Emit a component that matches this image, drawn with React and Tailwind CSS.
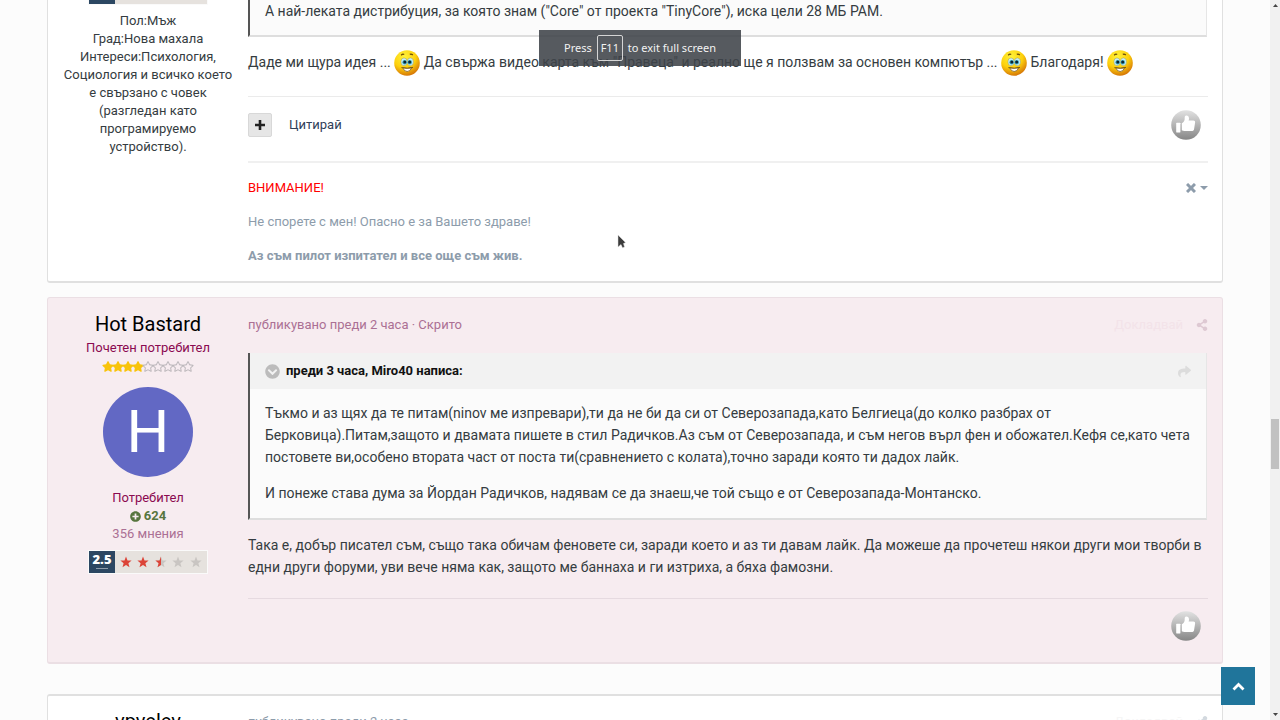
import React from 'react';
import { FaShareAlt, FaShare, FaPlusCircle, FaChevronCircleDown, FaStar, FaRegStar } from 'react-icons/fa';

function Smiley() {
  return (
    <svg className="inline-block h-[26px] w-[26px] align-middle" viewBox="0 0 26 26" role="img" aria-label="усмивка">
      <defs>
        <radialGradient id="face" cx="0.4" cy="0.25" r="0.8">
          <stop offset="0" stopColor="#fff23a" />
          <stop offset="0.55" stopColor="#fdd00c" />
          <stop offset="1" stopColor="#d06a06" />
        </radialGradient>
      </defs>
      <circle cx="13" cy="13" r="12.8" fill="url(#face)" />
      <path d="M7.2 5.200q1.500-1.600 3-.7M15.800 4.300q1.600-.7 3 .6" stroke="#6b4c08" strokeWidth="1.300" fill="none" />
      <ellipse cx="10" cy="11.800" rx="3.100" ry="3.900" fill="#c9eef5" stroke="#8a8a50" strokeWidth="0.400" />
      <ellipse cx="16.400" cy="11.800" rx="3.100" ry="3.900" fill="#c9eef5" stroke="#8a8a50" strokeWidth="0.400" />
      <circle cx="10.600" cy="12.200" r="2.200" fill="#38a9c6" />
      <circle cx="15.800" cy="12.200" r="2.200" fill="#38a9c6" />
      <circle cx="10.800" cy="12" r="1.500" fill="#0d2430" />
      <circle cx="15.700" cy="12" r="1.500" fill="#0d2430" />
      <path d="M7.400 17.600q5.800 1.400 11.600-.2" fill="none" stroke="#7a5a14" strokeWidth="1" />
      <path d="M8.800 17.900q4.400 1 8.800 0-1.400 3.600-4.400 3.600t-4.400-3.600z" fill="#fff" stroke="#6b4a10" strokeWidth="0.700" />
    </svg>
  );
}

function LikeButton() {
  return (
    <button type="button" aria-label="Харесай" className="mr-[7px] block">
      <svg className="h-[30px] w-[30px]" viewBox="0 0 30 30">
        <defs>
          <linearGradient id="like" x1="0" y1="0" x2="0" y2="1">
            <stop offset="0" stopColor="#e2e2e2" />
            <stop offset="1" stopColor="#868686" />
          </linearGradient>
        </defs>
        <circle cx="15" cy="15" r="14.8" fill="url(#like)" />
        <rect x="5.2" y="12.8" width="4.2" height="9.6" rx="0.4" fill="#fff" />
        <path d="M10.8 13.2c1.800-.8 2.800-2.600 2.900-4.200 0-1.600-.2-3.400 1.300-3.600 1.900-.2 3 1.100 3 3 0 1-.2 1.500-.4 2.100h4.800c1.200 0 1.900.9 1.700 2l-1 6.400c-.2 1.300-1.100 2.100-2.300 2.100h-7.400c-.9 0-1.800-.2-2.600-.7z" fill="#fff" />
      </svg>
    </button>
  );
}

const starPath = 'M6 .6l1.500 3.800 4.100.2-3.200 2.600 1.100 4L6 9l-3.500 2.200 1.100-4L.4 4.600l4.100-.2z';

function RatingBadge() {
  return (
    <div className="mx-auto flex h-6 w-[120px] border border-[#fafafa] bg-[#e6e2de]">
      <div className="flex w-[26px] flex-col items-center bg-[#2c4762] text-white">
        <span className="font-['Open_Sans',sans-serif] text-[13px] leading-[17px] font-extrabold">2.5</span>
        <span className="h-px w-3 bg-[#8e9cab]"></span>
      </div>
      <svg className="h-[22px] w-[92px]" viewBox="0 0 92 22" role="img" aria-label="2.5 от 5">
        <g fill="#c9c5c2">
          <path transform="translate(40 5)" d={starPath} />
          <path transform="translate(57 5)" d={starPath} />
          <path transform="translate(75 5)" d={starPath} />
        </g>
        <g fill="#dc4438">
          <path transform="translate(5 5)" d={starPath} />
          <path transform="translate(22 5)" d={starPath} />
          <path transform="translate(40 5)" d="M6 .6V9l-3.500 2.200 1.100-4L.4 4.600l4.100-.2z" />
        </g>
      </svg>
    </div>
  );
}

function Quote({ children, className }) {
  return (
    <blockquote className={'mr-px border-r border-b-2 border-l-2 border-r-[#e6e6e6] border-b-[#dedede] border-l-[#555] bg-[#fbfbfb] text-[14px] leading-[22px] ' + className}>
      {children}
    </blockquote>
  );
}

export default function App() {
  return (
    <div className="relative flex h-screen overflow-hidden bg-[#fcfcfc] font-[Roboto,sans-serif] text-[13px] leading-[18px] text-[#353c41]">
      <main className="min-w-0 flex-1 px-[47px]">
        <article className="flex rounded-b-[3px] border-x border-b-2 border-[#e0e0e0] bg-white pb-[15px]">
          <aside className="w-[200px] shrink-0 px-[14px] text-center">
            <div className="flex h-[5px] items-end overflow-hidden">
              <RatingBadge />
            </div>
            <ul className="mt-[7px]">
              <li>Пол:Мъж</li>
              <li>Град:Нова махала</li>
              <li>Интереси:Психология, Социология и всичко което е свързано с човек (разгледан като програмируемо устройство).</li>
            </ul>
          </aside>
          <div className="min-w-0 flex-1 pr-[14px]">
            <Quote className="h-[37px] px-[15px]">
              <p>А най-леката дистрибуция, за която знам ("Core" от проекта "TinyCore"), иска цели 28 МБ РАМ.</p>
            </Quote>
            <p className="mt-[13px] mb-5 text-[14px] leading-[22px]">
              Даде ми щура идея ... <Smiley /> Да свържа видео карта към "Правеца" и реално ще я ползвам за основен компютър ... <Smiley /> Благодаря! <Smiley />
            </p>
            <div className="flex items-start border-t border-[#ebebeb] pt-[13px]">
              <button type="button" aria-label="Мултицитат" className="mt-[3px] flex h-6 w-6 items-center justify-center rounded-[2px] border border-[#d8d8d8] bg-[#e6e6e6]">
                <svg className="h-[10px] w-[10px]" viewBox="0 0 10 10"><path d="M5 0v10M0 5h10" stroke="#222" strokeWidth="2.600" /></svg>
              </button>
              <a href="#quote" className="mt-[6px] ml-[17px] text-[#304059]">Цитирай</a>
              <div className="ml-auto">
                <LikeButton />
              </div>
            </div>
            <div className="mt-[21px] flex items-start justify-between border-t-2 border-[#f0f0f0] pt-[15px] text-[#8d9cab]">
              <div className="space-y-[14px] leading-5">
                <p className="text-[#ff0000]">ВНИМАНИЕ!</p>
                <p>Не спорете с мен! Опасно е за Вашето здраве!</p>
                <p className="font-bold">Аз съм пилот изпитател и все още съм жив.</p>
              </div>
              <button type="button" aria-label="Скрий подписа" className="flex items-center gap-1 pt-[5px]">
                <svg className="h-[10px] w-[10px]" viewBox="0 0 10 10"><path d="M1 1l8 8M9 1L1 9" stroke="#8d9cab" strokeWidth="3" /></svg>
                <svg className="h-[10px] w-[8px]" viewBox="0 0 8 10"><path d="M0 3h8L4 7z" fill="#8d9cab" /></svg>
              </button>
            </div>
          </div>
        </article>

        <article className="mt-[14px] flex rounded-[3px] border border-b-2 border-[#ebdfe4] bg-[#f7ecf0] pb-[21px]">
          <aside className="w-[200px] shrink-0 px-3 pt-[14px] text-center">
            <h3 className="text-[20px] leading-6 text-black">Hot Bastard</h3>
            <p className="mt-[3px] text-[#8b0a50]">Почетен потребител</p>
            <div className="mt-1 flex justify-center text-[#bdb8bc]" role="img" aria-label="4 от 9 звезди">
              {[0, 1, 2, 3].map((i) => <FaStar key={i} className="-mx-px h-[11px] w-3 text-[#f8c30a]" />)}
              {[0, 1, 2, 3, 4].map((i) => <FaRegStar key={i} className="-mx-px h-[11px] w-3" />)}
            </div>
            <div className="mx-auto mt-[15px] flex h-[90px] w-[90px] items-center justify-center rounded-full bg-[#6268c4] text-[60px] leading-none text-white">H</div>
            <ul className="mt-3">
              <li className="text-[#8b0a50]">Потребител</li>
              <li className="flex items-center justify-center gap-[3px] font-bold text-[#57753e]"><FaPlusCircle className="h-[11px] w-[11px]" /> 624</li>
              <li className="text-[#ab7094]">356 мнения</li>
            </ul>
            <div className="mt-[7px]">
              <RatingBadge />
            </div>
          </aside>
          <div className="min-w-0 flex-1 pt-[18px] pr-[14px]">
            <header className="flex items-center justify-between text-[#ab7094]">
              <a href="#post">публикувано преди 2 часа · Скрито</a>
              <div className="flex items-center gap-[13px] text-[#f3e3e9]">
                <a href="#report">Докладвай</a>
                <button type="button" aria-label="Сподели" className="text-[12px] text-[#dec9d3]"><FaShareAlt /></button>
              </div>
            </header>
            <Quote className="mt-[19px]">
              <div className="flex h-9 items-center bg-[#f2f2f2] px-[15px] text-[13px]">
                <FaChevronCircleDown className="h-[15px] w-[15px] text-[#bcbcbc]" />
                <strong className="ml-[6px] font-bold text-[#111]">преди 3 часа, Miro40 написа:</strong>
                <a href="#source" aria-label="Към мнението" className="ml-auto text-[13px] text-[#dcdcdc]"><FaShare /></a>
              </div>
              <div className="space-y-[14px] px-[15px] pt-[13px] pb-[14px]">
                <p>Тъкмо и аз щях да те питам(ninov ме изпревари),ти да не би да си от Северозапада,като Белгиеца(до колко разбрах от Берковица).Питам,защото и двамата пишете в стил Радичков.Аз съм от Северозапада, и съм негов върл фен и обожател.Кефя се,като чета постовете ви,особено втората част от поста ти(сравнението с колата),точно заради която ти дадох лайк.</p>
                <p>И понеже става дума за Йордан Радичков, надявам се да знаеш,че той също е от Северозапада-Монтанско.</p>
              </div>
            </Quote>
            <p className="mt-[14px] text-[14px] leading-[22px]">Така е, добър писател съм, също така обичам феновете си, заради което и аз ти давам лайк. Да можеше да прочетеш някои други мои творби в едни други форуми, уви вече няма как, защото ме баннаха и ги изтриха, а бяха фамозни.</p>
            <div className="mt-5 flex justify-end border-t border-[#e6dae0] pt-3">
              <LikeButton />
            </div>
          </div>
        </article>

        <article className="mt-[30px] flex rounded-[3px] border border-t-2 border-[#e0e0e0] bg-white">
          <aside className="w-[200px] shrink-0 px-3 pt-[13px] text-center">
            <h3 className="text-[20px] leading-6 text-black">vpvelev</h3>
          </aside>
          <header className="flex flex-1 items-start justify-between pt-[17px] pr-[14px] text-[#8d9cab]">
            <a href="#next">публикувано преди 2 часа</a>
            <div className="flex items-center gap-[13px] text-[#f6f6f6]">
              <a href="#report-next">Докладвай</a>
              <button type="button" aria-label="Сподели" className="text-[12px] text-[#d3d9df]"><FaShareAlt /></button>
            </div>
          </header>
        </article>
      </main>

      <div className="flex w-[10px] shrink-0 flex-col items-center justify-between bg-[#f1f1f1] py-1" aria-hidden="true">
        <svg className="h-[3px] w-[5px]" viewBox="0 0 5 3"><path d="M2.500 0L5 3H0z" fill="#444" /></svg>
        <div className="mt-[168px] h-[50px] w-2 bg-[#c1c1c1]"></div>
        <svg className="h-[3px] w-[5px]" viewBox="0 0 5 3"><path d="M2.500 3L5 0H0z" fill="#444" /></svg>
      </div>

      <div className="absolute top-[30px] left-1/2 flex h-9 w-[202px] -translate-x-1/2 items-center justify-center gap-[5px] bg-[#3f4349]/88 font-['Noto_Sans',sans-serif] text-[11px] text-[#f2f2f2]">
        Press <kbd className="flex h-[26px] w-[26px] items-center justify-center rounded-[2px] border border-[#d5d5d5] font-['Noto_Sans',sans-serif]">F11</kbd> to exit full screen
      </div>

      <svg className="absolute top-[234px] left-[617px] h-[15px] w-[10px]" viewBox="0 0 10 15" aria-hidden="true">
        <path d="M1 1l7.500 7.500-2 1 1 3.500-2 .8L4 10.500 1 13z" fill="#3c3c3c" stroke="#ddd" strokeWidth="0.500" />
      </svg>

      <button type="button" aria-label="Нагоре" className="absolute right-[25px] bottom-[15px] flex h-[38px] w-[34px] items-center justify-center bg-[#20759b] text-white">
        <svg className="h-[9px] w-[13px]" viewBox="0 0 13 9"><path d="M1.500 7.500l5-5 5 5" fill="none" stroke="#fff" strokeWidth="2.800" /></svg>
      </button>
    </div>
  );
}
